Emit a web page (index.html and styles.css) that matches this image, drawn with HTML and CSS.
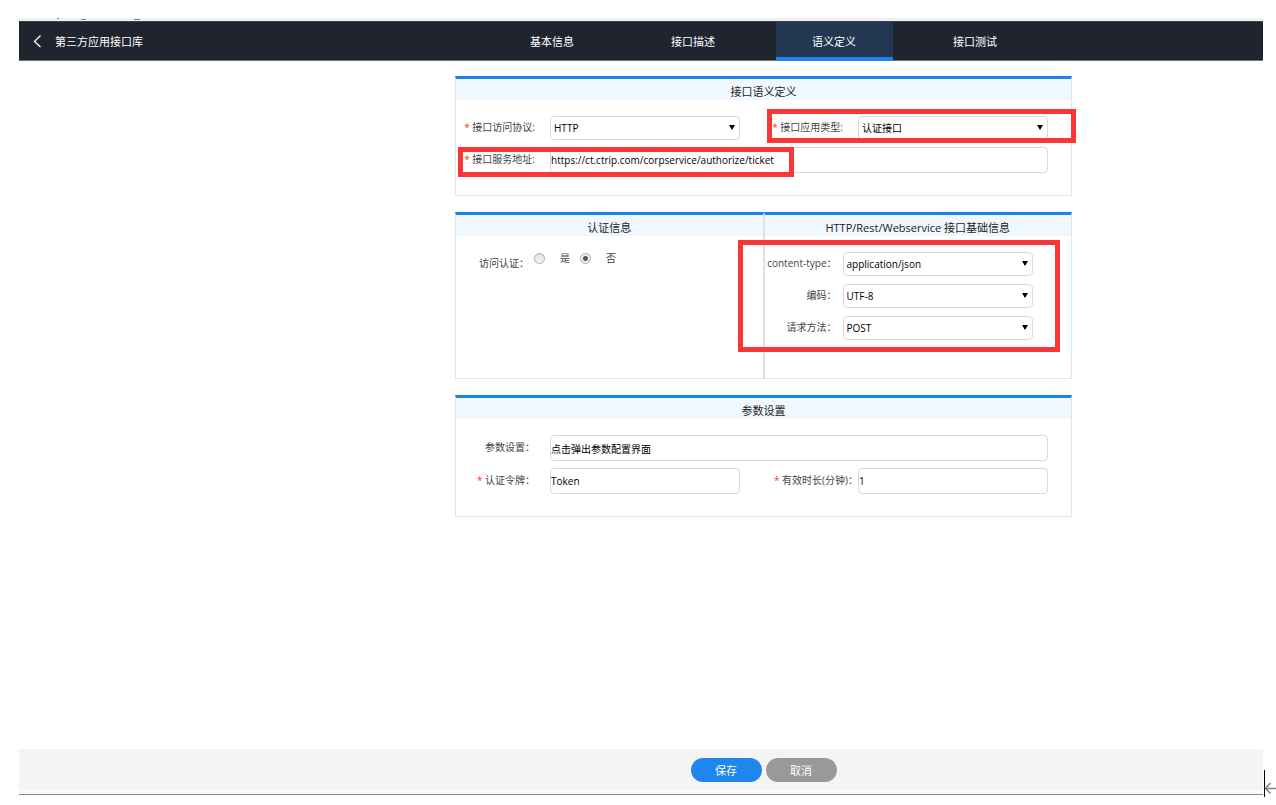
FILE: index.html
```html
<!DOCTYPE html>
<html lang="zh-CN">
<head>
    <meta charset="UTF-8">
    <meta name="viewport" content="width=device-width, initial-scale=1.0">
    <title>第三方应用接口库</title>
    <link rel="stylesheet" href="styles.css">
</head>
<body>

<div class="page">
    <div class="top-strip">
        <svg width="90" height="3" viewBox="0 0 90 3" aria-hidden="true">
            <path d="M1 0h2v1h-2z M25 1h5v1h-5z M78 1h6v1h-6z" fill="#80858d"/>
        </svg>
    </div>

    <header class="header">
        <a href="#" class="back">
            <svg width="9" height="14" viewBox="0 0 9 14" aria-hidden="true">
                <path d="M7.500 1.500L1.500 7.500l6 5.500" fill="none" stroke="#fff" stroke-width="1.300"/>
            </svg>
            <span>第三方应用接口库</span>
        </a>
        <nav class="tabs">
            <a href="#" class="tab">基本信息</a>
            <a href="#" class="tab">接口描述</a>
            <a href="#" class="tab active">语义定义</a>
            <a href="#" class="tab">接口测试</a>
        </nav>
    </header>

    <main class="main">
        <form id="api-form" class="form">
            <section class="panel">
                <h2 class="panel-title">接口语义定义</h2>
                <div class="fields">
                    <div class="field">
                        <label for="protocol"><i>*</i> 接口访问协议:</label>
                        <div class="select">
                            <select id="protocol"><option>HTTP</option></select>
                        </div>
                    </div>
                    <div class="field">
                        <label for="api-type"><i>*</i> 接口应用类型:</label>
                        <div class="select">
                            <select id="api-type"><option>认证接口</option></select>
                        </div>
                    </div>
                    <div class="field wide">
                        <label for="address"><i>*</i> 接口服务地址:</label>
                        <input type="text" id="address" class="input" value="https://ct.ctrip.com/corpservice/authorize/ticket">
                    </div>
                </div>
                <div class="mark mark-type"></div>
                <div class="mark mark-address"></div>
            </section>

            <div class="panel-row">
                <section class="panel">
                    <h2 class="panel-title">认证信息</h2>
                    <div class="auth" role="radiogroup" aria-labelledby="auth-label">
                        <span id="auth-label" class="auth-label">访问认证：</span>
                        <label class="radio"><input type="radio" name="auth">是</label>
                        <label class="radio"><input type="radio" name="auth" checked>否</label>
                    </div>
                </section>
                <section class="panel">
                    <h2 class="panel-title">HTTP/Rest/Webservice 接口基础信息</h2>
                    <div class="fields basic">
                        <div class="field">
                            <label for="content-type">content-type：</label>
                            <div class="select">
                                <select id="content-type"><option>application/json</option></select>
                            </div>
                        </div>
                        <div class="field">
                            <label for="charset">编码：</label>
                            <div class="select">
                                <select id="charset"><option>UTF-8</option></select>
                            </div>
                        </div>
                        <div class="field">
                            <label for="method">请求方法：</label>
                            <div class="select">
                                <select id="method"><option>POST</option></select>
                            </div>
                        </div>
                    </div>
                </section>
                <div class="mark mark-basic"></div>
            </div>

            <section class="panel">
                <h2 class="panel-title">参数设置</h2>
                <div class="fields">
                    <div class="field wide">
                        <label for="params">参数设置：</label>
                        <input type="text" id="params" class="input" value="点击弹出参数配置界面">
                    </div>
                    <div class="field">
                        <label for="token"><i>*</i> 认证令牌：</label>
                        <input type="text" id="token" class="input" value="Token">
                    </div>
                    <div class="field long-label">
                        <label for="expire"><i>*</i> 有效时长(分钟)：</label>
                        <input type="text" id="expire" class="input" value="1">
                    </div>
                </div>
            </section>
        </form>
    </main>

    <footer class="footer">
        <button type="submit" form="api-form" class="button primary">保存</button>
        <button type="button" class="button">取消</button>
    </footer>
</div>

<svg class="caret" width="12" height="28" viewBox="0 0 12 28" aria-hidden="true">
    <path d="M0.500 0v27" stroke="#000" stroke-width="1"/>
    <path d="M1.500 18.500H12M6.500 13L1.500 18.500l5 5" fill="none" stroke="#808080" stroke-width="1.500"/>
</svg>

</body>
</html>
```

FILE: styles.css
```css
* {
    box-sizing: border-box;
}
body {
    margin: 0;
    background: #fff;
    color: #222;
    font-family: "Open Sans", "Noto Sans CJK SC", sans-serif;
    font-size: 10px;
}
a {
    color: inherit;
    text-decoration: none;
}
.page {
    display: flex;
    flex-direction: column;
    min-height: 100vh;
    padding: 18px 13px 10px 19px;
}

/* header */
.top-strip {
    height: 3px;
    padding-left: 37px;
    background: #f0f0f0;
}
.top-strip svg {
    display: block;
}
.header {
    display: flex;
    height: 40px;
    background: #20242f;
    border-top: 1px solid #3d414b;
    border-bottom: 1px solid #70747c;
    color: #fff;
    font-size: 11px;
}
.back {
    display: flex;
    align-items: center;
    gap: 13px;
    width: 245px;
    padding-left: 14px;
}
.tabs {
    display: flex;
    flex: 1;
    justify-content: center;
    gap: 24px;
    margin-bottom: -1px;
}
.tab {
    display: flex;
    align-items: center;
    justify-content: center;
    width: 117px;
    padding-top: 2px;
    border-bottom: 4px solid transparent;
}
.tab.active {
    background: #233752;
    border-bottom-color: #1c82ec;
}

/* form */
.main {
    flex: 1;
    padding: 15px 0 16px 245px;
}
.form {
    display: flex;
    flex-direction: column;
    gap: 16px;
    max-width: 617px;
    margin: 0 auto;
}
.panel {
    position: relative;
    border: 1px solid #e4e4e4;
    border-top: 3px solid #1c82ec;
}
.panel-title {
    margin: 0;
    padding-top: 4px;
    background: #f0f8ff;
    font-size: 11px;
    font-weight: normal;
    line-height: 17px;
    text-align: center;
}
.panel-row {
    position: relative;
    display: grid;
    grid-template-columns: 1fr 1fr;
}
.panel-row .panel + .panel {
    border-left-color: #ddd;
}
.fields {
    display: grid;
    grid-template-columns: 1fr 1fr;
    gap: 7px 24px;
    padding: 16px 23px 22px 0;
}
.field {
    display: grid;
    grid-template-columns: 79px 1fr;
    align-items: center;
    gap: 15px;
}
.field label {
    padding-bottom: 3px;
    color: #444;
    text-align: right;
    white-space: nowrap;
}
.field i {
    color: #f33;
    font-style: normal;
}
.wide {
    grid-column: 1 / 3;
}
.long-label {
    grid-template-columns: 94px 1fr;
    gap: 0;
}
.basic {
    grid-template-columns: 1fr;
    gap: 8px;
    padding: 16px 38px 38px 0;
}
.basic .field {
    grid-template-columns: 72px 1fr;
    gap: 6px;
}
.input,
select {
    display: block;
    width: 100%;
    margin: 0;
    border: 1px solid #d9d9d9;
    border-radius: 4px;
    background: #fff;
    color: #000;
    font: inherit;
}
.input {
    height: 26px;
    padding: 0;
}
select {
    height: 24px;
    padding: 0 20px 0 3px;
    appearance: none;
}
.select {
    position: relative;
}
.select::after {
    content: "";
    position: absolute;
    top: 9px;
    right: 5px;
    border: 3px solid transparent;
    border-top: 5px solid #000;
    border-bottom: 0;
    pointer-events: none;
}
.auth {
    display: flex;
    align-items: flex-start;
    padding: 15px 0 0 23px;
    color: #444;
    line-height: 14px;
}
.auth-label {
    width: 55px;
    padding-top: 5px;
}
.radio {
    display: flex;
    align-items: center;
    gap: 15px;
    width: 46px;
}
.radio input {
    width: 11px;
    height: 11px;
    margin: 0;
    border: 1px solid #aaa;
    border-radius: 50%;
    background: linear-gradient(#e2e2e2, #f4f4f4);
    appearance: none;
}
.radio input:checked {
    background: radial-gradient(circle, #555 0, #555 2px, #eee 3px);
}

/* red marks over the fields to fill in */
.mark {
    position: absolute;
    border: 5px solid #fc3636;
    pointer-events: none;
}
.mark-type {
    top: 30px;
    right: -5px;
    width: 309px;
    height: 34px;
}
.mark-address {
    top: 68px;
    left: 2px;
    width: 336px;
    height: 30px;
}
.mark-basic {
    top: 28px;
    right: 12px;
    width: 322px;
    height: 112px;
}

/* footer */
.footer {
    display: flex;
    align-items: center;
    justify-content: center;
    gap: 4px;
    height: 46px;
    padding: 0 0 3px 245px;
    background: #f4f4f4;
    border-bottom: 1px solid #888;
    box-shadow: inset 0 -4px #fafafa;
}
.button {
    width: 71px;
    height: 24px;
    padding: 0;
    border: 0;
    border-radius: 12px;
    background: #999;
    color: #fff;
    font: inherit;
    font-size: 11px;
    cursor: pointer;
}
.button.primary {
    background: #1f86ee;
}
.caret {
    position: fixed;
    right: 0;
    bottom: 7px;
}
```
